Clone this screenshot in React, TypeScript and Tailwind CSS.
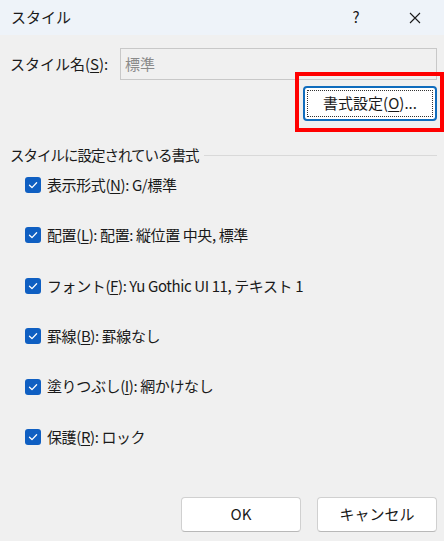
const font = { fontFamily: '"Noto Sans CJK JP", "Noto Sans", sans-serif' };

function Check() {
  return (
    <span className="flex h-4 w-4 shrink-0 items-center justify-center rounded-[3px] bg-[#0f5fc2]">
      <svg viewBox="0 0 16 16" className="h-4 w-4">
        <path d="M4.5 8.2 L7 10.6 L11.6 5.8" fill="none" stroke="white" strokeWidth="1.3" strokeLinecap="round" strokeLinejoin="round" />
      </svg>
    </span>
  );
}

const rows: [string, string, string][] = [
  ["表示形式(", "N", "): G/標準"],
  ["配置(", "L", "): 配置: 縦位置 中央, 標準"],
  ["フォント(", "F", "): Yu Gothic UI 11, テキスト 1"],
  ["罫線(", "B", "): 罫線なし"],
  ["塗りつぶし(", "I", "): 網かけなし"],
  ["保護(", "R", "): ロック"],
];

export default function App() {
  return (
    <div className="relative flex h-[541px] w-[444px] flex-col bg-[#f0f0f0] text-[15px] text-[#1a1a1a]" style={font}>
      <div className="flex h-[35px] shrink-0 items-center bg-[#eef3f9] pl-[11px]">
        <span className="flex-1">スタイル</span>
        <span className="w-[30px] text-center">?</span>
        <svg viewBox="0 0 12 12" className="ml-[38px] mr-[23px] h-[12px] w-[12px]">
          <path d="M1 1 L11 11 M11 1 L1 11" stroke="#1a1a1a" strokeWidth="1.1" />
        </svg>
      </div>

      <div className="mt-[13px] flex items-center pl-[10px] pr-[7px]">
        <span className="w-[110px]">
          スタイル名(<span className="underline underline-offset-2">S</span>):
        </span>
        <div className="flex h-[32px] flex-1 items-center border border-[#c8c8c8] bg-[#f0f0f0] pl-[4px] text-[#8a8a8a]">
          標準
        </div>
      </div>

      <div className="mt-[6px] flex justify-end pr-[7px]">
        <button className="h-[35px] w-[134px] rounded-[4px] border-2 border-[#0f6cbd] bg-white p-[2px]">
          <span className="flex h-full w-full items-center justify-center border border-dotted border-[#333]">
            書式設定(<span className="underline underline-offset-2">O</span>)...
          </span>
        </button>
      </div>

      <div className="mt-[24px] flex h-[20px] items-center pl-[10px] pr-[7px]">
        <span className="text-[14.5px] tracking-[-1px]">スタイルに設定されている書式</span>
        <div className="ml-[5px] h-px flex-1 bg-[#d9d9d9]" />
      </div>

      <div className="mt-[10px] flex flex-col gap-[30.4px] pl-[25px]">
        {rows.map(([a, k, b]) => (
          <div key={k} className="flex h-[20px] items-center gap-[6px]">
            <Check />
            <span className="tracking-[-0.4px]">
              {a}
              <span className="underline underline-offset-2">{k}</span>
              {b}
            </span>
          </div>
        ))}
      </div>

      <div className="mt-auto mb-[9px] flex justify-end gap-[16px] pr-[7px]">
        <button className="h-[35px] w-[120px] rounded-[4px] border border-[#d0d0d0] border-b-[#b8b8b8] bg-white">OK</button>
        <button className="h-[35px] w-[120px] rounded-[4px] border border-[#d0d0d0] border-b-[#b8b8b8] bg-white">キャンセル</button>
      </div>

      <div className="absolute left-[295px] top-[72px] h-[60px] w-[149px] border-[4px] border-[#ff0000]" />
    </div>
  );
}
